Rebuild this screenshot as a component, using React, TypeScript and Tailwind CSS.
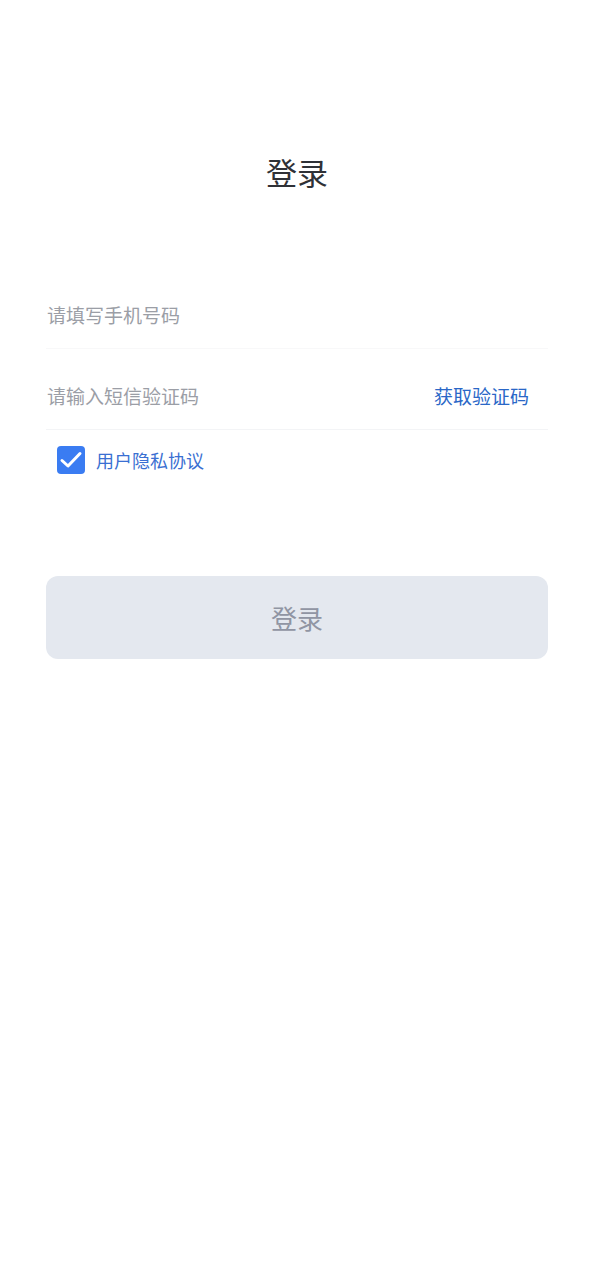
export default function App() {
  return (
    <div
      className="min-h-[1280px] w-full bg-white"
      style={{ fontFamily: '"Noto Sans CJK SC", "Noto Sans", sans-serif' }}
    >
      <div className="pt-[148px]">
        <h1 className="h-[48px] text-center text-[31px] font-normal leading-[48px] text-[#2f3136]">
          登录
        </h1>
      </div>

      <div className="mx-[46px] mt-[72px]">
        <div className="flex h-[81px] items-center border-b border-[#f8f8f9] pt-[14px]">
          <input
            className="w-full bg-transparent pl-[1px] text-[19px] text-[#333] outline-none placeholder:text-[#9b9ea6]"
            placeholder="请填写手机号码"
          />
        </div>
        <div className="flex h-[81px] items-center border-b border-[#f3f4f6] pt-[14px]">
          <input
            className="min-w-0 flex-1 bg-transparent pl-[1px] text-[19px] text-[#333] outline-none placeholder:text-[#9b9ea6]"
            placeholder="请输入短信验证码"
          />
          <button className="mr-[19px] text-[19px] text-[#2a67c7]">获取验证码</button>
        </div>
        <label className="mt-[16px] flex items-center pl-[11px]">
          <span className="flex h-[28px] w-[28px] items-center justify-center rounded-[4px] bg-[#3a7cf2]">
            <svg width="28" height="28" viewBox="0 0 28 28" fill="none">
              <path
                d="M5 14.5 L11 20 L23 7.5"
                stroke="white"
                strokeWidth="3"
                strokeLinecap="round"
                strokeLinejoin="round"
              />
            </svg>
          </span>
          <span className="ml-[11px] text-[18px] text-[#3a6fd2]">用户隐私协议</span>
        </label>
        <button className="mt-[102px] flex h-[83px] w-full items-center justify-center rounded-[12px] bg-[#e4e8ef] text-[26px] text-[#9095a3]">
          登录
        </button>
      </div>
    </div>
  )
}
